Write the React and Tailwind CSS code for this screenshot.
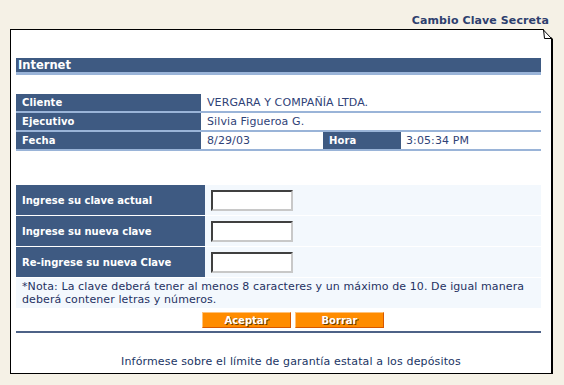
import React from 'react';

const font = { fontFamily: '"DejaVu Sans", Verdana, sans-serif' };

function InfoRow({ label, children }) {
  return (
    <div className="flex h-[19px] border-b-2 border-[#9ab4d8]">
      <div className="w-[185px] bg-[#3e5a82] pl-[6px] text-[10px] font-bold leading-[17px] text-white">{label}</div>
      {children}
    </div>
  );
}

function PassRow({ label }) {
  return (
    <div className="flex h-[30px]">
      <div className="flex w-[189px] items-center bg-[#3e5a82] pl-[6px] text-[10px] font-bold text-white">{label}</div>
      <div className="flex flex-1 items-center bg-[#f3f8fd] pl-[6px]">
        <input
          type="password"
          className="h-[21px] w-[82px] border-2 border-t-[#404040] border-l-[#404040] border-r-[#c8c8c8] border-b-[#c8c8c8] bg-white outline-none"
        />
      </div>
    </div>
  );
}

function OrangeButton({ children }) {
  return (
    <button className="h-[16px] w-[89px] border border-t-[#ffc27a] border-l-[#ffc27a] border-r-[#d85800] border-b-[#d85800] bg-[#ff8c00] text-[10px] font-bold leading-[13px] text-white [text-shadow:1px_1px_0_#6b3a00]">
      {children}
    </button>
  );
}

export default function App() {
  return (
    <div className="h-[385px] w-[564px] overflow-hidden bg-[#f5f1e6] pl-[10px] pr-[11px] pt-[15px]" style={font}>
      <div className="h-[14px] pr-[4px] text-right text-[11px] font-bold leading-[12px] tracking-[0.1px] text-[#2e3f6e]">
        Cambio Clave Secreta
      </div>

      <div className="relative h-[345px] border border-r-2 border-black bg-white pl-[5px] pr-[10px] pt-[28px]">
        <svg className="absolute -right-[2px] -top-[1px]" width="12" height="12" viewBox="0 0 12 12">
          <polygon points="2,0 12,0 12,10" fill="#f5f1e6" />
          <polyline points="2,0.5 10.5,9.5" fill="none" stroke="#000" strokeWidth="1" />
          <polyline points="2.5,0.5 3.5,9.5 10.5,9.5" fill="none" stroke="#000" strokeWidth="1" />
        </svg>

        <div className="border-b-[3px] border-[#9ab4d8] bg-[#3e5a82] pl-[2px] text-[11.5px] font-bold leading-[14px] text-white">
          Internet
        </div>

        <div className="mt-[19px] text-[11px] tracking-[0.1px] text-[#2f4277]">
          <InfoRow label="Cliente">
            <div className="pl-[6px] leading-[17px]">VERGARA Y COMPAÑÍA LTDA.</div>
          </InfoRow>
          <InfoRow label="Ejecutivo">
            <div className="pl-[6px] leading-[17px]">Silvia Figueroa G.</div>
          </InfoRow>
          <InfoRow label="Fecha">
            <div className="w-[122px] pl-[6px] leading-[17px]">8/29/03</div>
            <div className="w-[78px] bg-[#3e5a82] pl-[6px] text-[10px] font-bold leading-[17px] text-white">Hora</div>
            <div className="pl-[5px] leading-[17px]">3:05:34 PM</div>
          </InfoRow>
        </div>

        <div className="mt-[34px] flex flex-col gap-px">
          <PassRow label="Ingrese su clave actual" />
          <PassRow label="Ingrese su nueva clave" />
          <PassRow label="Re-ingrese su nueva Clave" />
          <div className="h-[30px] bg-[#f3f8fd] pl-[6px] pt-[2px] text-[11px] leading-[13px] tracking-[0.1px] text-[#1f3263]">
            *Nota: La clave deberá tener al menos 8 caracteres y un máximo de 10. De igual manera deberá contener letras y números.
          </div>
        </div>

        <div className="mt-[4px] flex justify-center gap-[4px] pl-[29px]">
          <OrangeButton>Aceptar</OrangeButton>
          <OrangeButton>Borrar</OrangeButton>
        </div>

        <div className="mt-[3px] h-[2px] bg-[#4d6287]" />

        <div className="mt-[22px] flex justify-center pl-[25px] text-[11px] leading-[13px] tracking-[0.15px] text-[#1a3564]">
          Infórmese sobre el límite de garantía estatal a los depósitos
        </div>
      </div>
    </div>
  );
}
